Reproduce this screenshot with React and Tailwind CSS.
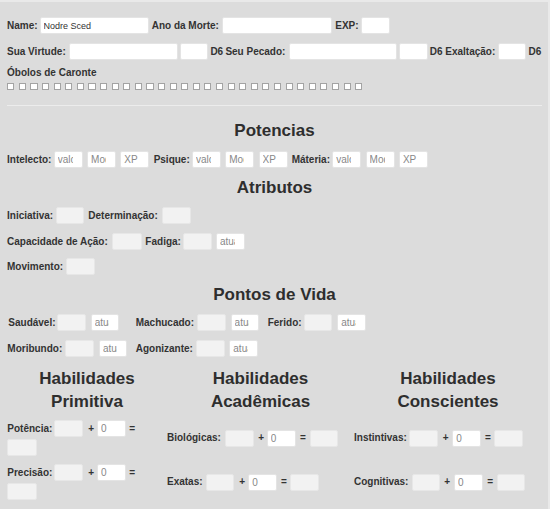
import React from "react";

const LBL = "text-[10px] font-bold leading-[12px] whitespace-nowrap text-[#333] shrink-0";

function Lbl({ c = "", children }) {
  return <span className={`${LBL} ${c}`}>{children}</span>;
}

function Box({ c = "", ph, v, gray, sz = "text-[10px]" }) {
  return (
    <input
      readOnly
      defaultValue={v}
      placeholder={ph}
      className={`h-[17px] shrink-0 rounded-[2px] border pl-[3px] pr-[9px] leading-[15px] text-[#333] outline-none placeholder:text-[#888] ${sz} ${
        gray ? "bg-[#f2f2f2] border-[#e7e7e7]" : "bg-white border-[#e4e4e4]"
      } ${c}`}
    />
  );
}

function Heading({ children, c = "" }) {
  return (
    <div className={`text-center text-[17px] font-bold leading-[20px] text-[#2e2e2e] ${c}`}>
      {children}
    </div>
  );
}

export default function App() {
  const boxes = Array.from({ length: 31 });
  return (
    <div className="w-[550px] min-h-[509px] bg-[#dcdcdc] border-t-2 border-r-2 border-[#e9e9e9] pl-[7px] pr-[6px] font-['Liberation_Sans',Arial,sans-serif] text-[#333]">
      {/* Row 1 */}
      <div className="mt-[15px] flex h-[17px] items-center">
        <Lbl>Name:</Lbl>
        <Box c="ml-[2px] w-[109.5px]" v="Nodre Sced" sz="text-[9px]" />
        <Lbl c="ml-[2.6px]">Ano da Morte:</Lbl>
        <Box c="ml-[2.8px] w-[110px]" />
        <Lbl c="ml-[3.6px]">EXP:</Lbl>
        <Box c="ml-[2.1px] w-[29.3px]" />
      </div>

      {/* Row 2 */}
      <div className="mt-[9px] flex h-[17px] items-center">
        <Lbl>Sua Virtude:</Lbl>
        <Box c="ml-[3px] w-[109.3px]" />
        <Box c="ml-[1.7px] w-[28px]" />
        <Lbl c="ml-[2.7px]">D6</Lbl>
        <Lbl c="ml-[2.2px]">Seu Pecado:</Lbl>
        <Box c="ml-[3.3px] w-[108.7px]" />
        <Box c="ml-[1.6px] w-[28.7px]" />
        <Lbl c="ml-[2px]">D6 Exaltação:</Lbl>
        <Box c="ml-[2.7px] w-[28.3px]" />
        <Lbl c="ml-[2.3px]">D6</Lbl>
      </div>

      {/* Obolos */}
      <div className={`mt-[7px] ${LBL}`}>Óbolos de Caronte</div>
      <div className="mt-[4px] flex gap-[4.5px] pl-[0.3px]">
        {boxes.map((_, i) => (
          <span key={i} className="block h-[7px] w-[7.1px] border border-[#a3a3a3] bg-white" />
        ))}
      </div>

      <div className="mt-[15px] h-px bg-[#ececec]" />

      <Heading c="mt-[15px]">Potencias</Heading>
      <div className="mt-[10px] flex h-[17px] items-center">
        <Lbl>Intelecto:</Lbl>
        <Box c="ml-[2.3px] w-[29px]" ph="valor" />
        <Box c="ml-[4.3px] w-[29px]" ph="Mod" />
        <Box c="ml-[4.3px] w-[29px]" ph="XP" />
        <Lbl c="ml-[4.3px]">Psique:</Lbl>
        <Box c="ml-[2.2px] w-[29px]" ph="valor" />
        <Box c="ml-[4.3px] w-[29px]" ph="Mod" />
        <Box c="ml-[4.3px] w-[29px]" ph="XP" />
        <Lbl c="ml-[4.1px]">Máteria:</Lbl>
        <Box c="ml-[2.3px] w-[29px]" ph="valor" />
        <Box c="ml-[4.3px] w-[29px]" ph="Mod" />
        <Box c="ml-[4.3px] w-[29px]" ph="XP" />
      </div>

      <Heading c="mt-[10px]">Atributos</Heading>
      <div className="mt-[9px] flex h-[17px] items-center">
        <Lbl>Iniciativa:</Lbl>
        <Box gray c="ml-[2.6px] w-[28.3px]" />
        <Lbl c="ml-[4.3px]">Determinação:</Lbl>
        <Box gray c="ml-[3.9px] w-[29px]" />
      </div>
      <div className="mt-[9px] flex h-[17px] items-center">
        <Lbl>Capacidade de Ação:</Lbl>
        <Box gray c="ml-[4.6px] w-[29.3px]" />
        <Lbl c="ml-[3.7px]">Fadiga:</Lbl>
        <Box gray c="ml-[2.4px] w-[28.6px]" />
        <Box c="ml-[4px] w-[29.4px]" ph="atual" />
      </div>
      <div className="mt-[8px] flex h-[17px] items-center">
        <Lbl>Movimento:</Lbl>
        <Box gray c="ml-[3.2px] w-[28.7px]" />
      </div>

      <Heading c="mt-[10px]">Pontos de Vida</Heading>
      <div className="mt-[9px] flex h-[17px] items-center">
        <div className="flex w-[128.7px] items-center">
          <Lbl c="ml-[1.3px]">Saudável:</Lbl>
          <Box gray c="ml-[1.8px] w-[28.7px]" />
          <Box c="ml-[4.7px] w-[28.3px]" ph="atual" />
        </div>
        <div className="flex w-[132px] items-center">
          <Lbl>Machucado:</Lbl>
          <Box gray c="ml-[3.2px] w-[28.7px]" />
          <Box c="ml-[4.7px] w-[28.3px]" ph="atual" />
        </div>
        <div className="flex items-center">
          <Lbl>Ferido:</Lbl>
          <Box gray c="ml-[2.4px] w-[28.3px]" />
          <Box c="ml-[5px] w-[28.4px]" ph="atual" />
        </div>
      </div>
      <div className="mt-[9px] flex h-[17px] items-center">
        <div className="flex w-[128.7px] items-center">
          <Lbl c="ml-[0.3px]">Moribundo:</Lbl>
          <Box gray c="ml-[3px] w-[28.7px]" />
          <Box c="ml-[5px] w-[28.3px]" ph="atual" />
        </div>
        <div className="flex w-[132px] items-center">
          <Lbl>Agonizante:</Lbl>
          <Box gray c="ml-[3.1px] w-[29px]" />
          <Box c="ml-[4.3px] w-[29px]" ph="atual" />
        </div>
      </div>

      {/* Habilidades */}
      <div className="mt-[10px] grid grid-cols-[160px_187px_188px]">
        <div className="text-center text-[17px] font-bold leading-[23px] text-[#2e2e2e]">
          Habilidades
          <br />
          Primitiva
        </div>
        <div className="text-center text-[17px] font-bold leading-[23px] text-[#2e2e2e]">
          Habilidades
          <br />
          Acadêmicas
        </div>
        <div className="text-center text-[17px] font-bold leading-[23px] text-[#2e2e2e]">
          Habilidades
          <br />
          Conscientes
        </div>
      </div>

      <div className="mt-[7px] grid grid-cols-[160px_187px_188px] items-center">
        <div className="flex flex-col gap-[2px]">
          <div className="flex h-[17px] items-center">
            <Lbl c="ml-[0.3px]">Potência:</Lbl>
            <Box gray c="ml-[2px] w-[29px]" />
            <Lbl c="ml-[5px]">+</Lbl>
            <Box c="ml-[2.9px] w-[28.7px]" ph="0" />
            <Lbl c="ml-[3.6px]">=</Lbl>
          </div>
          <div className="flex h-[17px] items-center">
            <Box gray c="ml-[0.3px] w-[29.4px]" />
          </div>
        </div>
        <div className="flex h-[17px] items-center">
          <Lbl>Biológicas:</Lbl>
          <Box gray c="ml-[4.1px] w-[29px]" />
          <Lbl c="ml-[4.3px]">+</Lbl>
          <Box c="ml-[2.6px] w-[29px]" ph="0" />
          <Lbl c="ml-[4.3px]">=</Lbl>
          <Box gray c="ml-[4.2px] w-[28.3px]" />
        </div>
        <div className="flex h-[17px] items-center">
          <Lbl>Instintivas:</Lbl>
          <Box gray c="ml-[2.5px] w-[29px]" />
          <Lbl c="ml-[4.4px]">+</Lbl>
          <Box c="ml-[3.8px] w-[28.4px]" ph="0" />
          <Lbl c="ml-[4.3px]">=</Lbl>
          <Box gray c="ml-[3.5px] w-[29px]" />
        </div>
      </div>

      <div className="mt-[8px] grid grid-cols-[160px_187px_188px] items-center">
        <div className="flex flex-col gap-[2px]">
          <div className="flex h-[17px] items-center">
            <Lbl c="ml-[0.3px]">Precisão:</Lbl>
            <Box gray c="ml-[2px] w-[29px]" />
            <Lbl c="ml-[5px]">+</Lbl>
            <Box c="ml-[2.9px] w-[28.7px]" ph="0" />
            <Lbl c="ml-[3.6px]">=</Lbl>
          </div>
          <div className="flex h-[17px] items-center">
            <Box gray c="ml-[0.3px] w-[29.4px]" />
          </div>
        </div>
        <div className="flex h-[17px] items-center">
          <Lbl>Exatas:</Lbl>
          <Box gray c="ml-[3.4px] w-[28.3px]" />
          <Lbl c="ml-[5px]">+</Lbl>
          <Box c="ml-[3.2px] w-[28.4px]" ph="0" />
          <Lbl c="ml-[4.3px]">=</Lbl>
          <Box gray c="ml-[3.2px] w-[29.3px]" />
        </div>
        <div className="flex h-[17px] items-center">
          <Lbl>Cognitivas:</Lbl>
          <Box gray c="ml-[3.2px] w-[28.3px]" />
          <Lbl c="ml-[4.3px]">+</Lbl>
          <Box c="ml-[3.9px] w-[28.7px]" ph="0" />
          <Lbl c="ml-[4.6px]">=</Lbl>
          <Box gray c="ml-[3.6px] w-[28.3px]" />
        </div>
      </div>
    </div>
  );
}
